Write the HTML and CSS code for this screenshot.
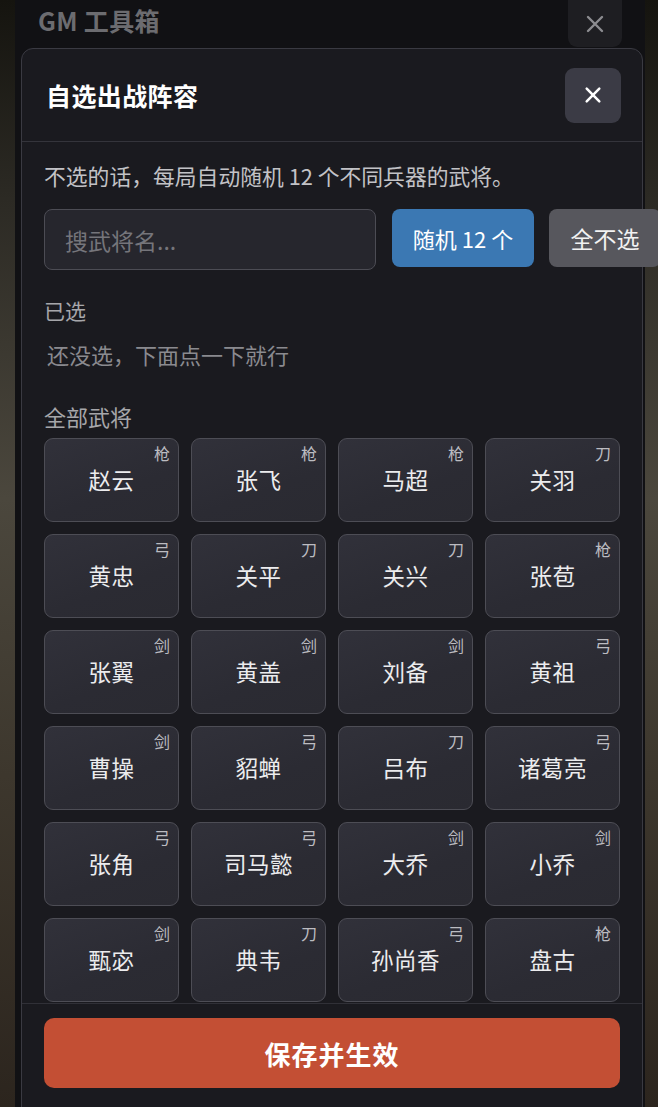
FILE: index.html
```html
<!DOCTYPE html>
<html lang="zh-CN">
<head>
<meta charset="utf-8">
<title>自选出战阵容</title>
<link rel="stylesheet" href="styles.css">
</head>
<body>
<div class="scene">
  <div class="gm">
    <div class="gm-head">
      <span class="gm-title">GM 工具箱</span>
      <button class="gm-close" type="button">
        <svg viewBox="0 0 20 20" width="20" height="20"><path d="M3 3 L17 17 M17 3 L3 17" stroke="currentColor" stroke-width="2.4" stroke-linecap="round" fill="none"/></svg>
      </button>
    </div>
    <div class="modal">
      <div class="modal-head">
        <h2 class="modal-title">自选出战阵容</h2>
        <button class="modal-close" type="button">
          <svg viewBox="0 0 20 20" width="18" height="18"><path d="M3 3 L17 17 M17 3 L3 17" stroke="currentColor" stroke-width="2.8" stroke-linecap="round" fill="none"/></svg>
        </button>
      </div>
      <div class="modal-top">
        <p class="desc">不选的话，每局自动随机 12 个不同兵器的武将。</p>
        <div class="toolbar">
          <input class="search" type="text" placeholder="搜武将名...">
          <button class="btn btn-random" type="button">随机 12 个</button>
          <button class="btn btn-clear" type="button">全不选</button>
        </div>
      </div>
      <div class="modal-scroll">
        <div class="label">已选</div>
        <div class="hint">还没选，下面点一下就行</div>
        <div class="label label-all">全部武将</div>
        <div class="grid">
          <div class="card"><span class="weapon">枪</span><span class="name">赵云</span></div>
          <div class="card"><span class="weapon">枪</span><span class="name">张飞</span></div>
          <div class="card"><span class="weapon">枪</span><span class="name">马超</span></div>
          <div class="card"><span class="weapon">刀</span><span class="name">关羽</span></div>
          <div class="card"><span class="weapon">弓</span><span class="name">黄忠</span></div>
          <div class="card"><span class="weapon">刀</span><span class="name">关平</span></div>
          <div class="card"><span class="weapon">刀</span><span class="name">关兴</span></div>
          <div class="card"><span class="weapon">枪</span><span class="name">张苞</span></div>
          <div class="card"><span class="weapon">剑</span><span class="name">张翼</span></div>
          <div class="card"><span class="weapon">剑</span><span class="name">黄盖</span></div>
          <div class="card"><span class="weapon">剑</span><span class="name">刘备</span></div>
          <div class="card"><span class="weapon">弓</span><span class="name">黄祖</span></div>
          <div class="card"><span class="weapon">剑</span><span class="name">曹操</span></div>
          <div class="card"><span class="weapon">弓</span><span class="name">貂蝉</span></div>
          <div class="card"><span class="weapon">刀</span><span class="name">吕布</span></div>
          <div class="card"><span class="weapon">弓</span><span class="name">诸葛亮</span></div>
          <div class="card"><span class="weapon">弓</span><span class="name">张角</span></div>
          <div class="card"><span class="weapon">弓</span><span class="name">司马懿</span></div>
          <div class="card"><span class="weapon">剑</span><span class="name">大乔</span></div>
          <div class="card"><span class="weapon">剑</span><span class="name">小乔</span></div>
          <div class="card"><span class="weapon">剑</span><span class="name">甄宓</span></div>
          <div class="card"><span class="weapon">刀</span><span class="name">典韦</span></div>
          <div class="card"><span class="weapon">弓</span><span class="name">孙尚香</span></div>
          <div class="card"><span class="weapon">枪</span><span class="name">盘古</span></div>
        </div>
      </div>
      <div class="modal-foot">
        <button class="btn-save" type="button">保存并生效</button>
      </div>
    </div>
  </div>
</div>
</body>
</html>
```

FILE: styles.css
```css
* { box-sizing: border-box; }

html, body {
  margin: 0;
  padding: 0;
  width: 658px;
  height: 1107px;
  overflow: hidden;
}

body {
  font-family: "Noto Sans CJK SC", "Noto Sans", sans-serif;
  background: #2a2620;
}

.scene {
  height: 1107px;
  background: linear-gradient(180deg, #15140f 0%, #2c2a24 18%, #4b473d 45%, #3d372d 70%, #2c251e 100%);
  display: flex;
  overflow: hidden;
}

.gm {
  margin-left: 15px;
  width: 630px;
  height: 1107px;
  background: #111114;
  display: flex;
  flex-direction: column;
}

.gm-head {
  height: 48px;
  flex-shrink: 0;
  display: flex;
  align-items: flex-start;
  justify-content: space-between;
  padding: 0 23px 0 23px;
}

.gm-title {
  font-size: 25px;
  font-weight: 700;
  color: #6c6c70;
  line-height: 40px;
  letter-spacing: 0.3px;
}

.gm-close {
  width: 54px;
  height: 60px;
  margin-top: -13px;
  border: none;
  border-radius: 9px;
  background: #1e1e22;
  color: #8c8c90;
  display: flex;
  align-items: center;
  justify-content: center;
  padding: 13px 0 0 0;
}

.modal {
  margin-left: 6px;
  width: 622px;
  height: 1120px;
  flex-shrink: 0;
  background: #1a1a1f;
  border: 1px solid #3a3a42;
  border-radius: 12px;
  display: flex;
  flex-direction: column;
}

.modal-head {
  height: 93px;
  flex-shrink: 0;
  display: flex;
  align-items: center;
  justify-content: space-between;
  padding: 0 21px 0 24px;
  border-bottom: 1px solid #34343b;
}

.modal-title {
  margin: 0;
  font-size: 25px;
  font-weight: 700;
  color: #ffffff;
  letter-spacing: 0.4px;
}

.modal-close {
  width: 56px;
  height: 55px;
  border: none;
  border-radius: 9px;
  background: #3b3b45;
  color: #ffffff;
  display: flex;
  align-items: center;
  justify-content: center;
  padding: 0;
}

.modal-top {
  flex-shrink: 0;
  padding: 19px 22px 0 22px;
}

.desc {
  margin: 0;
  font-size: 21.8px;
  line-height: 30px;
  color: #c2c2c6;
}

.toolbar {
  margin-top: 18px;
  display: flex;
  align-items: flex-start;
  gap: 16px;
}

.search {
  flex-shrink: 0;
  width: 332px;
  height: 61px;
  padding: 0 20px;
  border: 1px solid #4c4c54;
  border-radius: 8px;
  background: #26262d;
  font-family: inherit;
  font-size: 23px;
  color: #ddd;
  outline: none;
}

.search::placeholder {
  color: #75757b;
}

.btn {
  flex-shrink: 0;
  height: 58px;
  border: none;
  border-radius: 8px;
  font-family: inherit;
  font-size: 22px;
  color: #ffffff;
  padding: 0;
  white-space: nowrap;
}

.btn-random {
  width: 142px;
  background: #3b78b3;
}

.btn-clear {
  width: 112px;
  margin-left: -1px;
  font-size: 23px;
  background: #57575d;
  color: #f2f2f2;
}

.modal-scroll {
  height: 733px;
  flex-shrink: 0;
  overflow: hidden;
  padding: 25px 22px 0 22px;
}

.label {
  font-size: 21px;
  line-height: 30px;
  color: #a6a6aa;
}

.hint {
  margin-top: 14px;
  padding-left: 3px;
  font-size: 22px;
  line-height: 30px;
  color: #8a8a8f;
}

.label-all {
  margin-top: 32px;
  font-size: 22px;
}

.grid {
  margin-top: 7px;
  display: grid;
  grid-template-columns: repeat(4, 1fr);
  gap: 12px;
}

.card {
  position: relative;
  height: 84px;
  border: 1px solid #4d4d55;
  border-radius: 9px;
  background: linear-gradient(160deg, #31313a 0%, #2b2b33 60%, #2a2a31 100%);
  display: flex;
  align-items: center;
  justify-content: center;
  padding-bottom: 3px;
}

.name {
  font-size: 22.5px;
  color: #ececee;
  letter-spacing: 0.5px;
}

.weapon {
  position: absolute;
  top: 2px;
  right: 8px;
  font-size: 16px;
  color: #bcbcc1;
}

.modal-foot {
  flex: 1;
  border-top: 1px solid #303037;
  padding: 14px 22px 0 22px;
}

.btn-save {
  width: 576px;
  height: 70px;
  border: none;
  border-radius: 10px;
  background: #c34f34;
  color: #ffffff;
  font-family: inherit;
  font-size: 26px;
  font-weight: 700;
  letter-spacing: 1px;
  padding: 0;
}
```
